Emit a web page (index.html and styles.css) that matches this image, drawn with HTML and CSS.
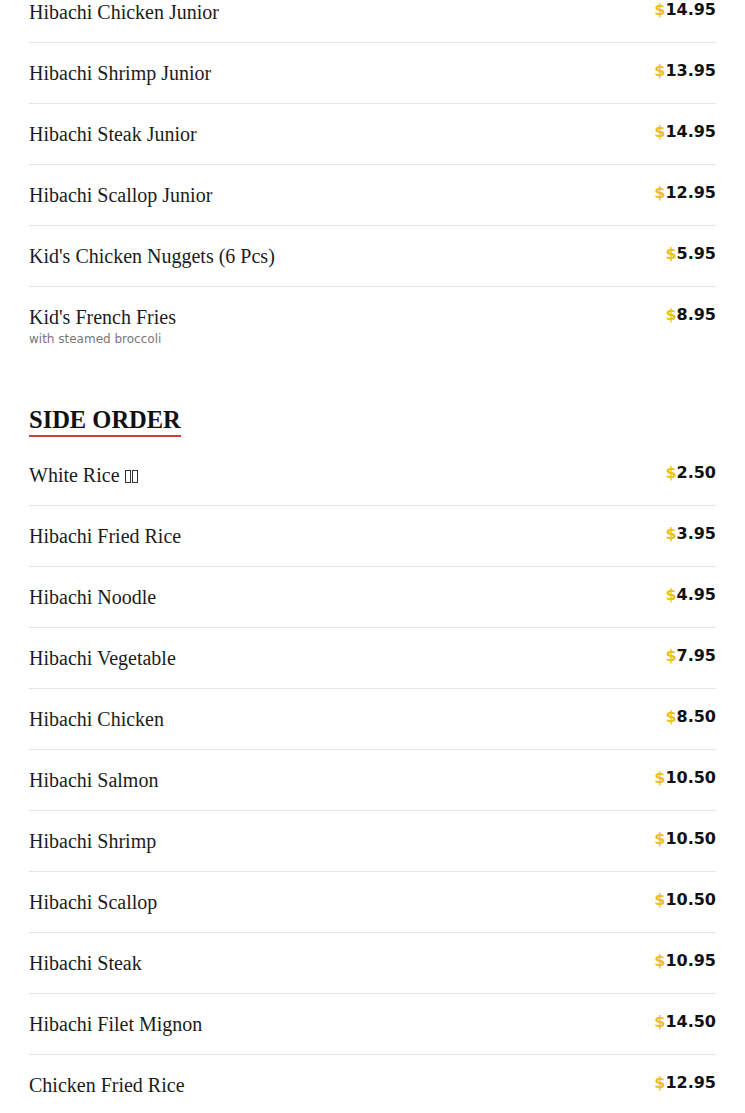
FILE: index.html
```html
<!DOCTYPE html>
<html lang="en">
<head>
<meta charset="utf-8">
<title>Menu</title>
<link rel="stylesheet" href="styles.css">
</head>
<body>
<main class="menu">
  <section class="section first">
    <div class="item"><div class="info"><div class="name">Hibachi Chicken Junior</div></div><div class="price"><span class="cur">$</span>14.95</div></div>
    <div class="item"><div class="info"><div class="name">Hibachi Shrimp Junior</div></div><div class="price"><span class="cur">$</span>13.95</div></div>
    <div class="item"><div class="info"><div class="name">Hibachi Steak Junior</div></div><div class="price"><span class="cur">$</span>14.95</div></div>
    <div class="item"><div class="info"><div class="name">Hibachi Scallop Junior</div></div><div class="price"><span class="cur">$</span>12.95</div></div>
    <div class="item"><div class="info"><div class="name">Kid's Chicken Nuggets (6 Pcs)</div></div><div class="price"><span class="cur">$</span>5.95</div></div>
    <div class="item last"><div class="info"><div class="name">Kid's French Fries</div><div class="desc">with steamed broccoli</div></div><div class="price"><span class="cur">$</span>8.95</div></div>
  </section>
  <section class="section">
    <h2 class="heading">SIDE ORDER</h2>
    <div class="item"><div class="info"><div class="name">White Rice <span class="tofu"></span><span class="tofu"></span></div></div><div class="price"><span class="cur">$</span>2.50</div></div>
    <div class="item"><div class="info"><div class="name">Hibachi Fried Rice</div></div><div class="price"><span class="cur">$</span>3.95</div></div>
    <div class="item"><div class="info"><div class="name">Hibachi Noodle</div></div><div class="price"><span class="cur">$</span>4.95</div></div>
    <div class="item"><div class="info"><div class="name">Hibachi Vegetable</div></div><div class="price"><span class="cur">$</span>7.95</div></div>
    <div class="item"><div class="info"><div class="name">Hibachi Chicken</div></div><div class="price"><span class="cur">$</span>8.50</div></div>
    <div class="item"><div class="info"><div class="name">Hibachi Salmon</div></div><div class="price"><span class="cur">$</span>10.50</div></div>
    <div class="item"><div class="info"><div class="name">Hibachi Shrimp</div></div><div class="price"><span class="cur">$</span>10.50</div></div>
    <div class="item"><div class="info"><div class="name">Hibachi Scallop</div></div><div class="price"><span class="cur">$</span>10.50</div></div>
    <div class="item"><div class="info"><div class="name">Hibachi Steak</div></div><div class="price"><span class="cur">$</span>10.95</div></div>
    <div class="item"><div class="info"><div class="name">Hibachi Filet Mignon</div></div><div class="price"><span class="cur">$</span>14.50</div></div>
    <div class="item"><div class="info"><div class="name">Chicken Fried Rice</div></div><div class="price"><span class="cur">$</span>12.95</div></div>
  </section>
</main>
</body>
</html>
```
FILE: styles.css
```css
html, body {
  margin: 0;
  padding: 0;
  background: #ffffff;
}
body {
  overflow: hidden;
}
.menu {
  padding: 0 29px;
  margin-top: -18px;
}
.section.first {
  margin-bottom: 40px;
}
.item {
  display: flex;
  justify-content: space-between;
  align-items: flex-start;
  padding: 18px 0;
  border-bottom: 1px solid #e6e6e6;
}
.item.last {
  border-bottom: none;
}
.name {
  font-family: "Liberation Serif", "DejaVu Serif", serif;
  font-size: 20px;
  line-height: 24px;
  color: #1c1c1c;
}
.desc {
  margin-top: 2px;
  font-family: "DejaVu Sans", sans-serif;
  font-size: 12px;
  line-height: 16px;
  color: #777777;
}
.price {
  font-family: "DejaVu Sans", sans-serif;
  font-weight: bold;
  font-size: 16px;
  line-height: 20px;
  color: #111111;
  white-space: nowrap;
}
.cur {
  color: #ecc01a;
}
.heading {
  display: inline-block;
  margin: 0 0 8px 0;
  font-family: "Liberation Serif", "DejaVu Serif", serif;
  font-weight: bold;
  font-size: 24.5px;
  line-height: 30px;
  color: #111111;
  border-bottom: 2px solid #c8413a;
}
.tofu {
  display: inline-block;
  width: 4px;
  height: 11px;
  border: 1px solid #333;
  margin-right: 1px;
  vertical-align: -1px;
}
```
